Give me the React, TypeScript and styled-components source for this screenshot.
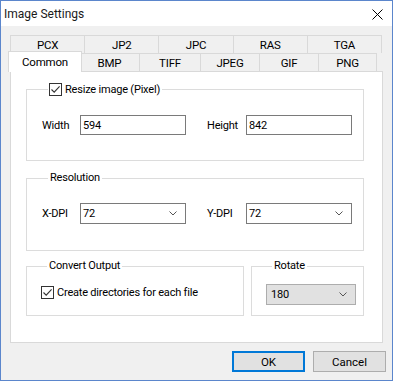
import React from "react";
import styled, { createGlobalStyle } from "styled-components";

const GlobalStyle = createGlobalStyle`
  html, body {
    margin: 0;
    padding: 0;
    background: #ffffff;
  }
  body {
    font-family: Roboto, "Liberation Sans", Arial, sans-serif;
    font-size: 11px;
    letter-spacing: -0.2px;
    color: #000000;
  }
  * {
    box-sizing: border-box;
  }
`;

const Window = styled.div`
  width: 393px;
  height: 381px;
  border: 1px solid #5b86cc;
  background: #f0f0f0;
  display: flex;
  flex-direction: column;
`;

const TitleBar = styled.div`
  height: 25px;
  flex-shrink: 0;
  background: #ffffff;
  display: flex;
  align-items: center;
  justify-content: space-between;
  padding: 0 9px 0 3px;
  font-size: 12px;
  letter-spacing: 0;
  color: #1a1a1a;
`;

const CloseIcon = styled.svg`
  width: 11px;
  height: 11px;
  margin-top: 1px;
`;

const Body = styled.div`
  flex: 1;
  display: flex;
  flex-direction: column;
  padding: 9px 0 0 9px;
`;

const TabStrip = styled.div`
  width: 372px;
  display: flex;
  flex-direction: column;
`;

const TabRow = styled.div`
  display: flex;
  height: 18px;
`;

const Tab = styled.div<{ $w?: number; $active?: boolean }>`
  flex: ${(p) => (p.$w ? `0 0 ${p.$w}px` : "1")};
  display: flex;
  align-items: center;
  justify-content: center;
  border: 1px solid #d9d9d9;
  border-bottom: none;
  margin-left: -1px;
  background: #f0f0f0;
  font-size: 11.5px;
  &:first-child {
    margin-left: 0;
  }
  ${(p) =>
    p.$active &&
    `
    position: relative;
    z-index: 1;
    background: #ffffff;
    flex: 0 0 ${(p.$w || 70) + 4}px;
    height: 21px;
    margin: -2px -2px 0 -2px !important;
    align-items: flex-start;
    padding-top: 3px;
  `}
`;

const Panel = styled.div`
  width: 373px;
  background: #ffffff;
  border: 1px solid #d9d9d9;
  padding: 11px 18px 26px 15px;
  display: flex;
  flex-direction: column;
`;

const Group = styled.fieldset<{ $mt?: number; $pad: string }>`
  margin: ${(p) => p.$mt || 0}px 0 0 0;
  padding: ${(p) => p.$pad};
  border: 1px solid #dcdcdc;
  min-width: 0;
  flex: 1;
`;

const Legend = styled.legend`
  margin-left: 6px;
  padding: 0 2px;
  line-height: 16px;
  display: flex;
  align-items: center;
  gap: 3px;
`;

const CheckLegend = styled(Legend)`
  line-height: 13px;
  padding: 0 2px 0 1px;
`;

const FieldRow = styled.div`
  display: flex;
  align-items: center;
`;

const Label = styled.span<{ $w: number }>`
  width: ${(p) => p.$w}px;
  flex-shrink: 0;
`;

const TextBox = styled.div`
  width: 106px;
  height: 20px;
  border: 1px solid #7a7a7a;
  background: #ffffff;
  display: flex;
  align-items: center;
  padding-left: 2px;
`;

const Combo = styled.div<{ $flat?: boolean; $w?: number }>`
  width: ${(p) => p.$w || 106}px;
  height: 21px;
  border: 1px solid ${(p) => (p.$flat ? "#adadad" : "#7a7a7a")};
  background: ${(p) => (p.$flat ? "#e1e1e1" : "#ffffff")};
  display: flex;
  align-items: center;
  justify-content: space-between;
  padding: 0 8px 0 ${(p) => (p.$flat ? 4 : 2)}px;
`;

const Spacer = styled.div<{ $w: number }>`
  width: ${(p) => p.$w}px;
  flex-shrink: 0;
`;

const BottomRow = styled.div`
  display: flex;
  gap: 7px;
  margin-top: 7px;
`;

const CheckBox = styled.span`
  width: 13px;
  height: 13px;
  flex-shrink: 0;
  border: 1px solid #333333;
  background: #ffffff;
  display: inline-flex;
`;

const CheckLine = styled.label`
  display: flex;
  align-items: center;
  gap: 3px;
  line-height: 13px;
`;

const ButtonBar = styled.div`
  display: flex;
  justify-content: flex-end;
  gap: 8px;
  margin-top: 8px;
  padding-right: 6px;
`;

const Button = styled.button<{ $default?: boolean }>`
  width: 73px;
  height: 21px;
  padding: 0;
  font: inherit;
  font-size: 11.5px;
  color: #000000;
  background: #e1e1e1;
  border: ${(p) => (p.$default ? "2px solid #0078d7" : "1px solid #adadad")};
`;

const Check = () => (
  <CheckBox>
    <svg width="11" height="11" viewBox="0 0 11 11">
      <path d="M1.5 5.5 L4.2 8.2 L9.6 2.4" fill="none" stroke="#333" strokeWidth="1.1" />
    </svg>
  </CheckBox>
);

const Arrow = () => (
  <svg width="8" height="5" viewBox="0 0 8 5">
    <path d="M0.5 0.5 L4 4 L7.5 0.5" fill="none" stroke="#555" strokeWidth="1" />
  </svg>
);

const topTabs = ["PCX", "JP2", "JPC", "RAS", "TGA"];
const bottomTabs: [string, number][] = [
  ["Common", 70],
  ["BMP", 61],
  ["TIFF", 62],
  ["JPEG", 60],
  ["GIF", 60],
  ["PNG", 59],
];

const App = () => (
  <>
    <GlobalStyle />
    <Window>
      <TitleBar>
        <span>Image Settings</span>
        <CloseIcon viewBox="0 0 11 11">
          <path d="M0.5 0.5 L10.5 10.5 M10.5 0.5 L0.5 10.5" stroke="#000" strokeWidth="1" />
        </CloseIcon>
      </TitleBar>
      <Body>
        <TabStrip>
          <TabRow>
            {topTabs.map((t) => (
              <Tab key={t}>{t}</Tab>
            ))}
          </TabRow>
          <TabRow>
            {bottomTabs.map(([t, w], i) => (
              <Tab key={t} $w={w} $active={i === 0}>
                {t}
              </Tab>
            ))}
          </TabRow>
        </TabStrip>
        <Panel>
          <Group $pad="19px 0 25px 15px">
            <CheckLegend>
              <Check />
              Resize image (Pixel)
            </CheckLegend>
            <FieldRow>
              <Label $w={38}>Width</Label>
              <TextBox>594</TextBox>
              <Spacer $w={21} />
              <Label $w={39}>Height</Label>
              <TextBox>842</TextBox>
            </FieldRow>
          </Group>
          <Group $mt={9} $pad="17px 0 26px 15px">
            <Legend>Resolution</Legend>
            <FieldRow>
              <Label $w={38}>X-DPI</Label>
              <Combo>
                72
                <Arrow />
              </Combo>
              <Spacer $w={21} />
              <Label $w={39}>Y-DPI</Label>
              <Combo>
                72
                <Arrow />
              </Combo>
            </FieldRow>
          </Group>
          <BottomRow>
            <Group $pad="12px 0 16px 14px" style={{ flex: "0 0 218px" }}>
              <Legend>Convert Output</Legend>
              <CheckLine>
                <Check />
                Create directories for each file
              </CheckLine>
            </Group>
            <Group $pad="10px 0 10px 14px">
              <Legend>Rotate</Legend>
              <Combo $flat $w={90}>
                180
                <Arrow />
              </Combo>
            </Group>
          </BottomRow>
        </Panel>
        <ButtonBar>
          <Button $default>OK</Button>
          <Button>Cancel</Button>
        </ButtonBar>
      </Body>
    </Window>
  </>
);

export default App;
